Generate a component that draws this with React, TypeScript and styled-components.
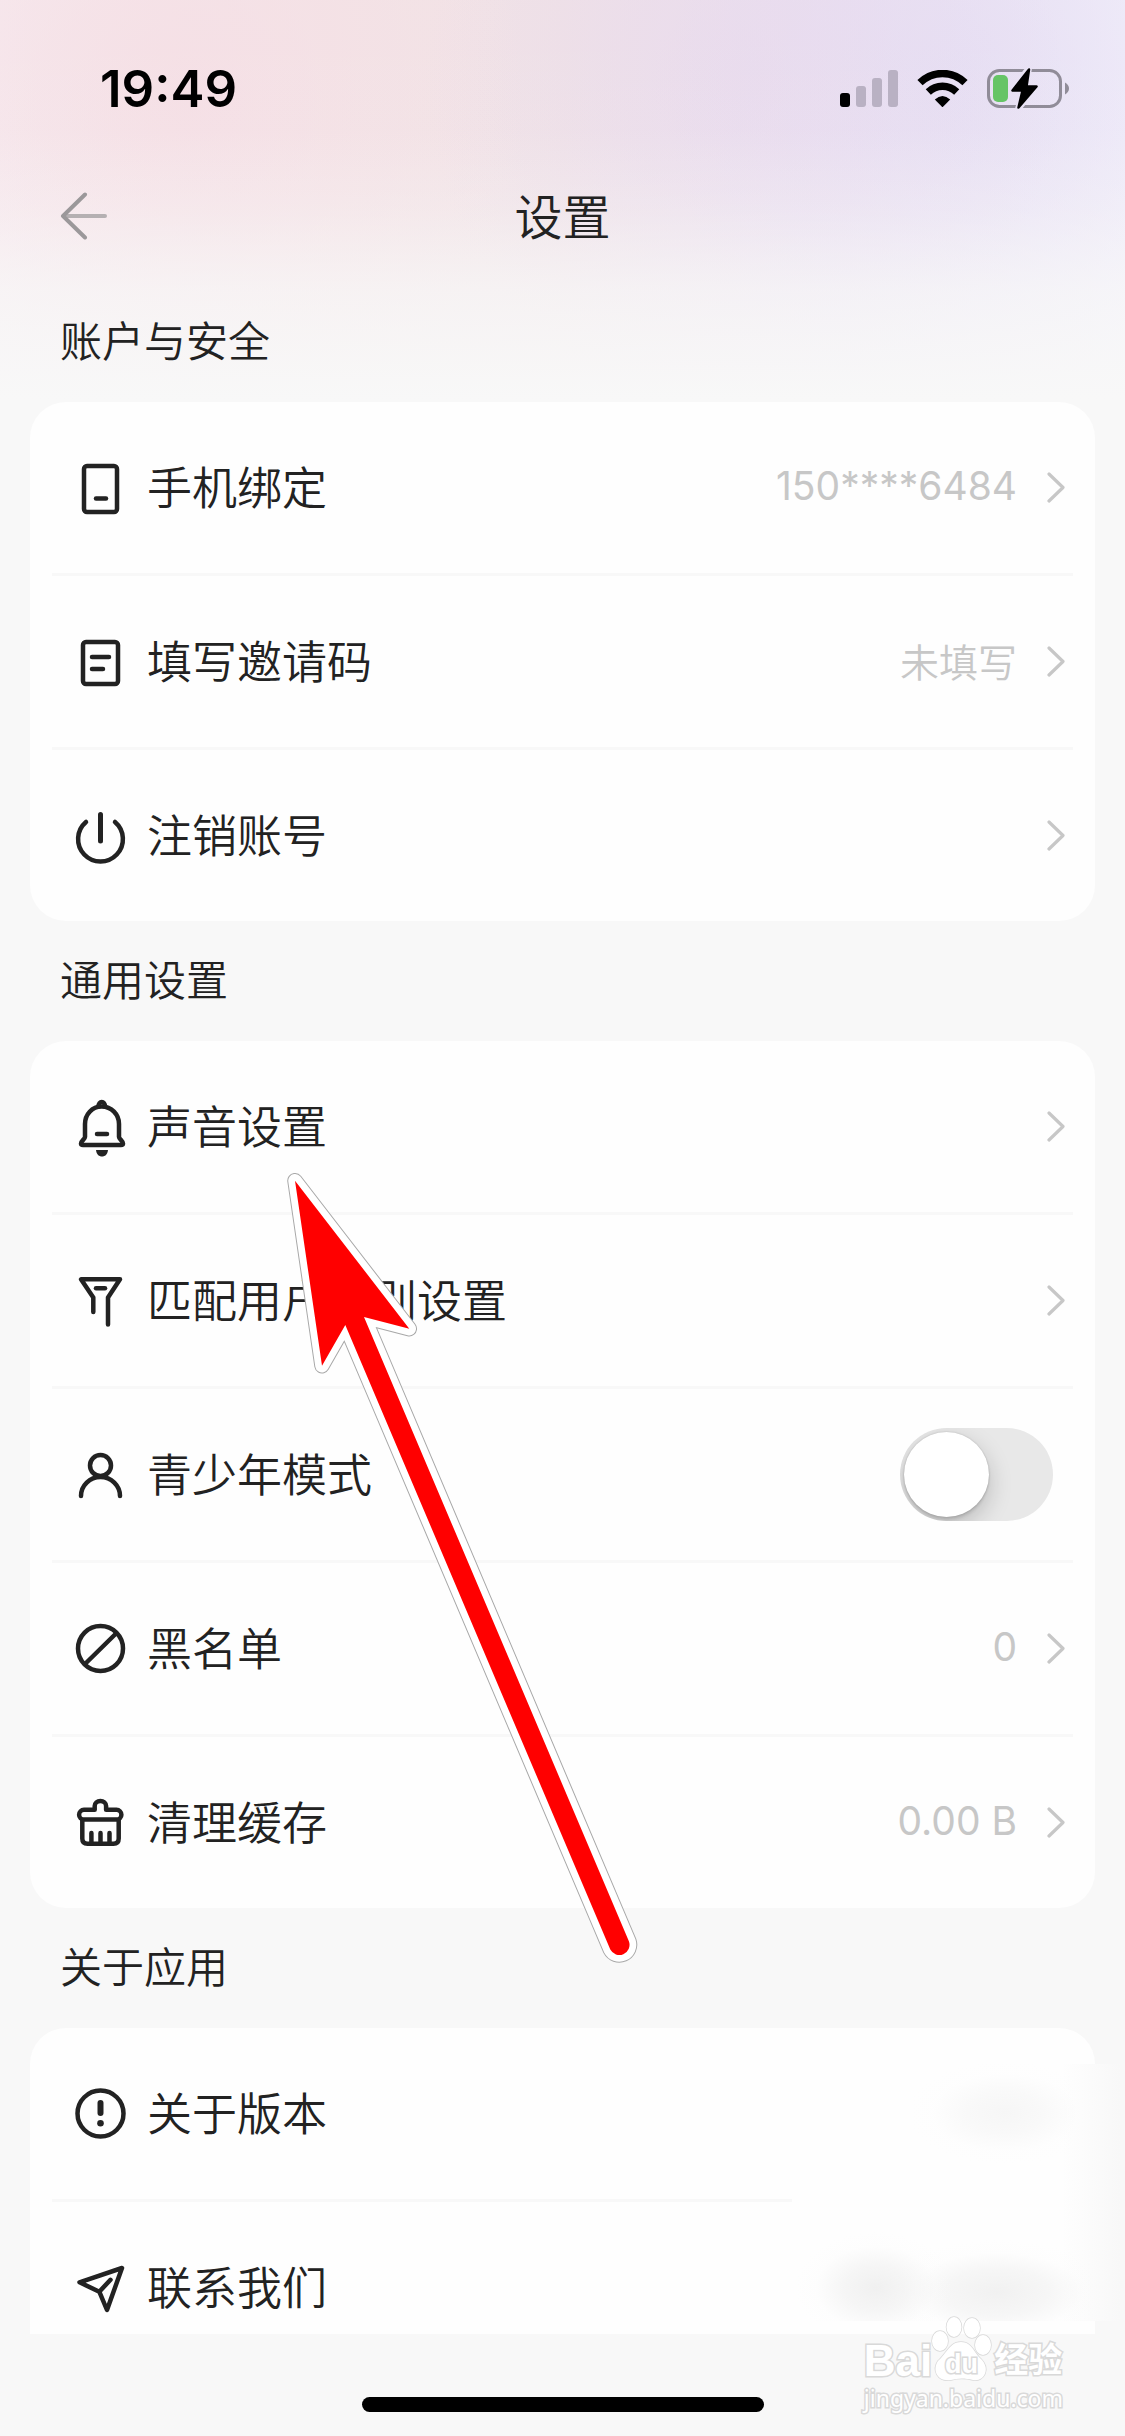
import React, { useState } from "react";
import styled, { createGlobalStyle } from "styled-components";

const color = {
  page: "#f8f8f8",
  card: "#fefefe",
  ink: "#222222",
  muted: "#c7c7c7",
  track: "#e8e8e8",
};

const sans = `Inter, "Noto Sans CJK SC", sans-serif`;

const GlobalStyle = createGlobalStyle`
  *, *::before, *::after { box-sizing: border-box; }
  body { margin: 0; background: ${color.page}; }
  button { appearance: none; border: 0; margin: 0; padding: 0; background: none; font: inherit; color: inherit; cursor: pointer; }
`;

const Screen = styled.div`
  position: relative;
  display: flex;
  flex-direction: column;
  height: 100vh;
  overflow: hidden;
  font-family: ${sans};
  color: ${color.ink};
  background:
    linear-gradient(to bottom, rgba(248, 248, 248, 0) 0, rgba(248, 248, 248, 0.04) 130px, rgba(248, 248, 248, 0.3) 210px, rgba(248, 248, 248, 0.72) 290px, #f8f8f8 400px),
    radial-gradient(ellipse 340px 340px at 17% 100px, #f5dfe5 0, rgba(245, 223, 229, 0) 100%),
    radial-gradient(ellipse 320px 320px at 66% 80px, rgba(232, 217, 237, 0.7) 0, rgba(232, 217, 237, 0) 100%),
    radial-gradient(ellipse 280px 320px at 84% 90px, #e6dff4 0, rgba(230, 223, 244, 0) 100%),
    linear-gradient(to right, #f7eaef 0, #f3e4e6 30%, #f0e2e6 50%, #ebe1f0 75%, #f1eefa 100%);
  background-color: ${color.page};
`;

const StatusBar = styled.div`
  display: flex;
  align-items: center;
  justify-content: space-between;
  height: 150px;
  padding: 56px 56px 29px 100px;
  flex-shrink: 0;
`;

const Clock = styled.time`
  font-size: 51px;
  line-height: 60px;
  font-weight: 600;
  color: #000;
`;

const StatusIcons = styled.div`
  display: flex;
  align-items: center;
  gap: 19px;

  svg { display: block; }
`;

const NavBar = styled.header`
  display: grid;
  grid-template-columns: 1fr auto 1fr;
  align-items: center;
  height: 132px;
  padding: 0 60px;
  flex-shrink: 0;
`;

const BackButton = styled.button`
  justify-self: start;
  display: flex;

  svg { display: block; }
`;

const Title = styled.h1`
  margin: 0;
  padding-top: 4px;
  font-size: 48px;
  line-height: 72px;
  font-weight: 350;
`;

const Content = styled.main`
  flex: 1;
  min-height: 0;
  overflow: hidden auto;
  scrollbar-width: none;
  padding: 0 30px;
`;

const SectionTitle = styled.h2`
  display: flex;
  align-items: center;
  height: 120px;
  margin: 0;
  padding: 0 0 8px 30px;
  font-size: 42px;
  font-weight: 350;
`;

const Card = styled.div`
  position: relative;
  border-radius: 36px;
  background: ${color.card};
`;

const List = styled.ul`
  margin: 0;
  padding: 0;
  list-style: none;
`;

const Item = styled.li`
  & + &::before {
    content: "";
    display: block;
    height: 3px;
    margin: 0 22px;
    background: ${color.page};
  }
`;

const Row = styled.button`
  display: flex;
  align-items: center;
  width: 100%;
  height: 171px;
  padding: 0 30px 0 40px;
  text-align: left;
`;

const RowIcon = styled.svg`
  display: block;
  flex-shrink: 0;
  width: 60px;
  height: 61px;
  margin-right: 17px;
  fill: none;
  stroke: ${color.ink};
  stroke-width: 4.5;
  stroke-linecap: round;
  stroke-linejoin: round;
`;

const RowLabel = styled.span`
  flex: 1;
  padding-top: 3px;
  font-size: 45px;
  line-height: 66px;
  font-weight: 350;
`;

const RowValue = styled.span<{ $numeric: boolean }>`
  margin-right: 30px;
  padding-top: ${(p) => (p.$numeric ? 0 : 3)}px;
  padding-bottom: ${(p) => (p.$numeric ? 3 : 0)}px;
  font-size: 39px;
  line-height: 60px;
  font-weight: ${(p) => (p.$numeric ? 400 : 350)};
  color: ${color.muted};
`;

const Chevron = styled.svg`
  display: block;
  flex-shrink: 0;
  width: 18px;
  height: 31px;
  fill: none;
  stroke: ${color.muted};
  stroke-width: 3.2;
  stroke-linecap: round;
  stroke-linejoin: round;
`;

const Switch = styled.input`
  appearance: none;
  flex-shrink: 0;
  width: 153px;
  height: 93px;
  margin: 0 12px 0 0;
  padding: 4px;
  border-radius: 47px;
  background: ${color.track};
  overflow: hidden;
  cursor: pointer;

  &::before {
    content: "";
    display: block;
    width: 85px;
    height: 85px;
    border-radius: 50%;
    background: #fff;
    box-shadow: 0 0 2px rgba(0, 0, 0, 0.2), 0 9px 24px rgba(0, 0, 0, 0.2), 0 3px 3px rgba(0, 0, 0, 0.1);
    transition: margin 0.2s;
  }

  &:checked { background: #65c466; }
  &:checked::before { margin-left: 60px; }
`;

/* Frosted patch that hides the private values of the last card. */
const Frost = styled.div`
  position: absolute;
  top: 36px;
  right: -28px;
  width: 331px;
  height: 257px;
  pointer-events: none;
  background:
    radial-gradient(ellipse 96px 52px at 213px 49px, #f6f6f6 0, rgba(247, 247, 247, 0.7) 40%, rgba(252, 252, 252, 0.2) 75%, rgba(254, 254, 254, 0) 100%),
    radial-gradient(ellipse 80px 56px at 84px 224px, #f0f0f0 0, rgba(242, 242, 242, 0.7) 40%, rgba(250, 250, 250, 0.2) 75%, rgba(254, 254, 254, 0) 100%),
    radial-gradient(ellipse 115px 52px at 205px 228px, #f1f1f1 0, rgba(243, 243, 243, 0.7) 45%, rgba(250, 250, 250, 0.2) 75%, rgba(254, 254, 254, 0) 100%),
    linear-gradient(to right, #fefefe 0, #fefefe 270px, #f8f8f8 328px);
`;

const Pointer = styled.svg`
  position: absolute;
  z-index: 2;
  top: 119px;
  left: 250px;
  width: 360px;
  height: 810px;
  pointer-events: none;
`;

const BottomBar = styled.footer`
  display: flex;
  justify-content: center;
  align-items: flex-end;
  height: 102px;
  padding-bottom: 24px;
  flex-shrink: 0;
`;

const HomeIndicator = styled.div`
  width: 402px;
  height: 15px;
  border-radius: 8px;
  background: #000;
`;

const Watermark = styled.div`
  position: absolute;
  right: 62px;
  bottom: 22px;
  display: flex;
  flex-direction: column;
  color: #fff;
  -webkit-text-stroke: 3px #d9d9d9;
  paint-order: stroke fill;
  pointer-events: none;
`;

const WatermarkBrand = styled.div`
  display: flex;
  align-items: flex-end;
  height: 66px;
  font-family: "Liberation Sans", "Noto Sans CJK SC", sans-serif;
  font-weight: 700;
  font-size: 44px;
  line-height: 43px;

  svg { display: block; overflow: visible; }
`;

const WatermarkName = styled.span`
  font-size: 34px;
`;

const WatermarkSite = styled.span`
  font-family: "Noto Sans", sans-serif;
  font-size: 23px;
  line-height: 32px;
`;

type IconName =
  | "phone"
  | "note"
  | "power"
  | "bell"
  | "filter"
  | "person"
  | "block"
  | "clean"
  | "about"
  | "send";

const iconShapes: Record<IconName, React.ReactNode> = {
  phone: (
    <>
      <rect x="14" y="9" width="33" height="46" rx="3" />
      <path d="M26 41.5H36" />
    </>
  ),
  note: (
    <>
      <rect x="13" y="11" width="35" height="42" rx="3" />
      <path d="M22 26H39M22 38H33" />
    </>
  ),
  power: (
    <>
      <path d="M16 17A22.4 22.4 0 1 0 45 17" />
      <path d="M30.5 9.5V36" strokeWidth="5" />
    </>
  ),
  bell: (
    <>
      <path d="M31.7 10.5C22 10.5 15 18.5 15 28V41C15 43 11 45 11 47.5Q11 49 13 49H51Q53 49 53 47.5C53 45 49 43 49 41V28C49 18.5 41.4 10.5 31.7 10.5Z" />
      <path d="M28.5 10.5C28.5 4.5 35 4.5 35 10.5" />
      <path d="M27 38H37" />
      <path d="M26 54H38C37.5 58.5 35 60.5 32 60.5S26.5 58.5 26 54Z" fill="#222222" stroke="none" />
    </>
  ),
  filter: (
    <>
      <path d="M23.3 42V27.5L11 9.3H50L38 27.5V54.5" />
      <path d="M26 18.3H35" />
    </>
  ),
  person: (
    <>
      <circle cx="30.5" cy="21.5" r="10.5" />
      <path d="M11 52A19.5 19 0 0 1 50 52" />
    </>
  ),
  block: (
    <>
      <circle cx="30.5" cy="30.5" r="22.5" />
      <path d="M16 45L45.5 16" />
    </>
  ),
  clean: (
    <>
      <path d="M24.7 17.8V14a5.7 5 0 0 1 11.4 0V17.8H46.5a4.9 4.9 0 0 1 0 9.8H14a4.9 4.9 0 0 1 0-9.8Z" />
      <path d="M12.3 28V46.5q0 5.2 5.2 5.2H43.5q5.2 0 5.2-5.2V28" />
      <path d="M21.4 41V51M30.5 41V51M39.5 41V51" />
    </>
  ),
  about: (
    <>
      <circle cx="30.5" cy="30.5" r="23" />
      <path d="M30.5 20V30" strokeWidth="6" />
      <circle cx="30.5" cy="40.3" r="3.3" fill="#222222" stroke="none" />
    </>
  ),
  send: (
    <path d="M52 11L9.5 25.3L29.3 34.7L37 53ZM29.3 34.7L40.5 22.8" />
  ),
};

interface Setting {
  icon: IconName;
  label: string;
  value?: string;
  kind?: "link" | "switch" | "private";
}

interface Group {
  title: string;
  settings: Setting[];
}

const groups: Group[] = [
  {
    title: "账户与安全",
    settings: [
      { icon: "phone", label: "手机绑定", value: "150****6484" },
      { icon: "note", label: "填写邀请码", value: "未填写" },
      { icon: "power", label: "注销账号" },
    ],
  },
  {
    title: "通用设置",
    settings: [
      { icon: "bell", label: "声音设置" },
      { icon: "filter", label: "匹配用户性别设置" },
      { icon: "person", label: "青少年模式", kind: "switch" },
      { icon: "block", label: "黑名单", value: "0" },
      { icon: "clean", label: "清理缓存", value: "0.00 B" },
    ],
  },
  {
    title: "关于应用",
    settings: [
      { icon: "about", label: "关于版本", kind: "private" },
      { icon: "send", label: "联系我们", kind: "private" },
    ],
  },
];

function SettingRow({ icon, label, value, kind = "link" }: Setting) {
  const [on, setOn] = useState(false);
  const isSwitch = kind === "switch";
  return (
    <Item>
      <Row as={isSwitch ? "label" : "button"}>
        <RowIcon viewBox="0 0 60 61" aria-hidden="true">
          {iconShapes[icon]}
        </RowIcon>
        <RowLabel>{label}</RowLabel>
        {value && <RowValue $numeric={/^\d/.test(value)}>{value}</RowValue>}
        {isSwitch && (
          <Switch type="checkbox" checked={on} onChange={() => setOn(!on)} />
        )}
        {kind === "link" && (
          <Chevron viewBox="0 0 18 31" aria-hidden="true">
            <path d="M2 2L16 15.5L2 29" />
          </Chevron>
        )}
      </Row>
    </Item>
  );
}

const arrowPath =
  "M15 20.7L129.3 168.7L84 157L349 781.5A10.2 10.2 0 0 1 330.3 789.5L65.3 165L42 205.7Z";

function PointerArrow() {
  return (
    <Pointer viewBox="0 0 360 810" aria-hidden="true" strokeLinejoin="round">
      <path d={arrowPath} fill="none" stroke="#a8a8a8" strokeWidth="15.5" />
      <path d={arrowPath} fill="none" stroke="#ffffff" strokeWidth="13.5" />
      <path d={arrowPath} fill="#ff0000" />
    </Pointer>
  );
}

function SignalIcon() {
  return (
    <svg width="58" height="37" viewBox="0 0 58 37" fill="#b9b1c3" aria-hidden="true">
      <rect x="0" y="23" width="10" height="14" rx="3" fill="#000" />
      <rect x="16" y="16" width="10" height="21" rx="3" />
      <rect x="32" y="8" width="10" height="29" rx="3" />
      <rect x="48" y="0" width="10" height="37" rx="3" />
    </svg>
  );
}

function WifiIcon() {
  return (
    <svg width="51" height="37" viewBox="0 0 51 37" aria-hidden="true">
      <path d="M3 12.7A32 32 0 0 1 48 12.7" fill="none" stroke="#000" strokeWidth="7.4" />
      <path d="M11.3 22A20.5 20.5 0 0 1 39.7 22" fill="none" stroke="#000" strokeWidth="7.4" />
      <path d="M17.8 29.5Q25.5 22.5 33.2 29.5L25.5 37.3Z" />
    </svg>
  );
}

function BatteryIcon() {
  return (
    <svg width="82" height="41" viewBox="0 0 82 41" aria-hidden="true">
      <defs>
        <mask id="bolt-gap">
          <rect width="82" height="41" fill="#fff" />
          <path d="M42 0L24 23H36L31 41L50 18H39Z" fill="#000" stroke="#000" strokeWidth="6" />
        </mask>
      </defs>
      <g mask="url(#bolt-gap)">
        <rect x="1.5" y="2.5" width="72" height="36" rx="11" fill="none" stroke="#908c98" strokeWidth="3" />
      </g>
      <rect x="6" y="7" width="15" height="27" rx="5" fill="#66c466" />
      <path d="M78 14.5Q82 17 82 20.5T78 26.5Z" fill="#908c98" />
      <path d="M42 1.5L25.5 22.5H35.5L31.5 39.5L49.5 18.5H39.5Z" stroke="#000" strokeWidth="2.5" strokeLinejoin="round" />
    </svg>
  );
}

function PawIcon() {
  return (
    <svg width="62" height="66" viewBox="0 0 62 66" fill="#fff" stroke="#d9d9d9" strokeWidth="1.5">
      <ellipse cx="8" cy="25" rx="8" ry="10" />
      <ellipse cx="22" cy="11" rx="7.5" ry="10" />
      <ellipse cx="40" cy="12" rx="8" ry="10" />
      <ellipse cx="51" cy="29" rx="8" ry="10" />
      <path d="M29 26C40 26 42 37 49 43C59 53 52 66 41 64C33 62 26 62 19 64C5 66 0 54 6 45C15 37 18 26 29 26Z" />
      <text x="13" y="57" fontSize="27" fontFamily="Liberation Sans, sans-serif" fontWeight="700" strokeWidth="3">
        du
      </text>
    </svg>
  );
}

export default function App() {
  return (
    <>
      <GlobalStyle />
      <Screen lang="zh-CN">
        <StatusBar>
          <Clock>19:49</Clock>
          <StatusIcons>
            <SignalIcon />
            <WifiIcon />
            <BatteryIcon />
          </StatusIcons>
        </StatusBar>
        <NavBar>
          <BackButton aria-label="返回">
            <svg width="48" height="48" viewBox="0 0 48 48" fill="none" strokeWidth="4" strokeLinecap="round" strokeLinejoin="round">
              <path d="M4 24H45" stroke="#b5b0b2" />
              <path d="M25 2.5L3 24L25 45.5" stroke="#9b989a" />
            </svg>
          </BackButton>
          <Title>设置</Title>
        </NavBar>
        <Content>
          {groups.map((group, index) => (
            <section key={group.title}>
              <SectionTitle>{group.title}</SectionTitle>
              <Card>
                <List>
                  {group.settings.map((setting) => (
                    <SettingRow key={setting.label} {...setting} />
                  ))}
                </List>
                {index === 1 && <PointerArrow />}
                {index === 2 && <Frost />}
              </Card>
            </section>
          ))}
        </Content>
        <BottomBar>
          <HomeIndicator />
        </BottomBar>
        <Watermark>
          <WatermarkBrand>
            <span>Bai</span>
            <PawIcon />
            <WatermarkName>经验</WatermarkName>
          </WatermarkBrand>
          <WatermarkSite>jingyan.baidu.com</WatermarkSite>
        </Watermark>
      </Screen>
    </>
  );
}
